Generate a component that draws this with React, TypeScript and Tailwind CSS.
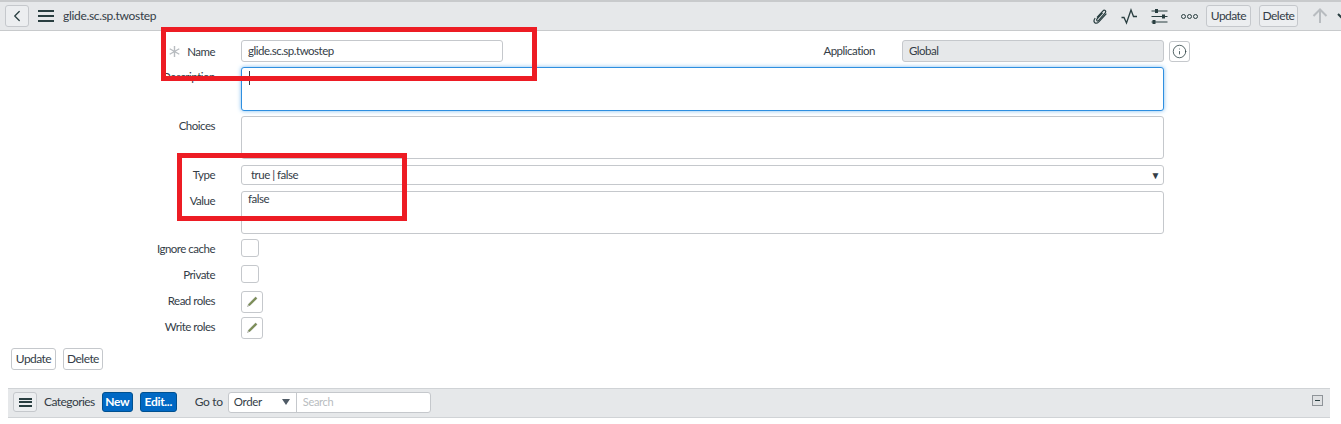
import { ChevronLeft, Info } from "lucide-react";

const font = "font-['Lato','Liberation_Sans',sans-serif]";
const text = "text-[12px] tracking-[-0.32px] text-[#343d47]";
const inputText = "text-[11.5px] tracking-[-0.5px] text-[#343d47]";
const labelText = "text-[11.5px] tracking-[-0.5px] text-[#343d47] leading-none";

function Bars({ w, bar, gap }: { w: string; bar: string; gap: string }) {
  return (
    <div className={`flex flex-col ${gap} ${w}`}>
      <span className={`${bar} bg-[#293e40]`} />
      <span className={`${bar} bg-[#293e40]`} />
      <span className={`${bar} bg-[#293e40]`} />
    </div>
  );
}

function ActionButton({ label, w, bg }: { label: string; w: string; bg: string }) {
  return (
    <button className={`${w} ${bg} ${text} h-[22px] border border-[#c5c8cc] rounded-[3px] leading-none tracking-[-0.55px] flex items-center justify-center`}>
      {label}
    </button>
  );
}

function Row({
  label,
  className,
  children,
}: {
  label: string;
  className: string;
  children: React.ReactNode;
}) {
  return (
    <div className={`flex items-start ${className}`}>
      <label className={`w-[215px] text-right shrink-0 pt-[4px] ${labelText}`}>{label}</label>
      <div className="ml-[26px] w-[923px]">{children}</div>
    </div>
  );
}

function TextArea({ h, focused, value }: { h: string; focused?: boolean; value?: string }) {
  return (
    <div
      className={`${h} ${inputText} w-full rounded-[3px] bg-white px-[6px] leading-none pt-[1px] border ${
        focused ? "border-[#2f8fe0] shadow-[0_0_4px_#7fbdf0]" : "border-[#c5c8cc]"
      }`}
    >
      {focused ? <span className="block w-px h-[14px] bg-[#343d47] ml-[1px] mt-[2px]" /> : value}
    </div>
  );
}

function PencilButton() {
  return (
    <button className="w-[22px] h-[22px] border border-[#c5c8cc] rounded-[3px] bg-white flex items-center justify-center">
      <svg width="14" height="14" viewBox="0 0 14 14">
        <path d="M3.2 9.4 L10.6 2 L12 3.4 L4.6 10.8 Z" fill="#7c8f52" stroke="#56624a" strokeWidth="0.4" />
        <path d="M3 9.8 L2 12 L4.2 11 Z" fill="#9a9d90" />
      </svg>
    </button>
  );
}

function PaperclipIcon() {
  return (
    <svg width="17" height="17" viewBox="0 0 17 17" fill="none" stroke="#293e40" strokeWidth="1.2">
      <path d="M5 9.5 L11 2.8 C12.4 1.3 14.6 2.9 13.4 4.7 L6.5 12.6 C5.6 13.6 4 12.5 4.9 11.2 L10.6 4.8" />
      <path d="M3.2 10.2 C1.8 12 1.5 13.4 2.6 14.5 C3.8 15.6 5.4 15.2 6.8 13.8 L14.4 5.6" />
    </svg>
  );
}

function PulseIcon() {
  return (
    <svg width="17" height="17" viewBox="0 0 17 17" fill="none" stroke="#293e40" strokeWidth="1.3">
      <path d="M0.5 9.5 H3 L5.5 15 L10 2 L12.5 8.5 H16" />
    </svg>
  );
}

function TuneIcon() {
  return (
    <svg width="17" height="17" viewBox="0 0 17 17" fill="#293e40" stroke="#293e40">
      <path d="M0.5 3 H16.5 M0.5 8.5 H16.5 M0.5 14 H16.5" strokeWidth="1" />
      <rect x="4" y="1" width="3" height="4" stroke="none" />
      <rect x="11" y="6.5" width="3" height="4" stroke="none" />
      <rect x="1.5" y="12" width="3" height="4" stroke="none" />
    </svg>
  );
}

export default function App() {
  return (
    <div className={`${font} relative w-[1341px] h-[424px] overflow-hidden bg-white`}>
      {/* Header */}
      <div className="h-[31px] bg-[#e6e8ea] border-t-2 border-t-[#c8cacc] border-b border-b-[#c8cacc] flex items-center pl-[5px]">
        <button className="w-[24px] h-[22px] border border-[#c5c8cc] rounded-[3px] bg-[#eceef0] flex items-center justify-center">
          <ChevronLeft className="w-[18px] h-[18px] text-[#293e40]" strokeWidth={1.75} />
        </button>
        <Bars w="w-[16px] ml-[9px]" bar="h-[2.5px]" gap="gap-[2.5px]" />
        <span className={`${text} ml-[9px]`}>glide.sc.sp.twostep</span>
        <div className="ml-auto flex items-center">
          <PaperclipIcon />
          <div className="ml-[12px]"><PulseIcon /></div>
          <div className="ml-[13px]"><TuneIcon /></div>
          <div className="flex gap-[1px] ml-[13px] mr-[8px]">
            <span className="w-[5px] h-[5px] rounded-full border border-[#293e40]" />
            <span className="w-[5px] h-[5px] rounded-full border border-[#293e40]" />
            <span className="w-[5px] h-[5px] rounded-full border border-[#293e40]" />
          </div>
          <ActionButton label="Update" w="w-[45px]" bg="bg-[#eceef0]" />
          <div className="w-[8px]" />
          <ActionButton label="Delete" w="w-[39px]" bg="bg-[#eceef0]" />
          <svg width="18" height="18" viewBox="0 0 18 18" fill="none" stroke="#b8bcc0" strokeWidth="2" className="ml-[13px]">
            <path d="M9 16 V3 M2.5 9 L9 2.5 L15.5 9" />
          </svg>
          <svg width="12" height="12" viewBox="0 0 12 12" fill="none" stroke="#293e40" strokeWidth="2" className="ml-[8px] -mr-[8px]">
            <path d="M1 4 L6 9 L11 4" />
          </svg>
        </div>
      </div>

      {/* Form */}
      <div className="pt-[9px]">
        <div className="flex items-start h-[27px]">
          <div className="w-[215px] flex justify-end items-center h-[22px] shrink-0 pt-[1px]">
            <svg width="11" height="11" viewBox="0 0 11 11" stroke="#b8bcc0" strokeWidth="1.4" className="mr-[7px]">
              <path d="M5.5 0 V11 M0.7 2.75 L10.3 8.25 M0.7 8.25 L10.3 2.75" />
            </svg>
            <span className={labelText}>Name</span>
          </div>
          <div className={`${inputText} ml-[26px] w-[262px] h-[22px] border border-[#c5c8cc] rounded-[3px] px-[6px] flex items-center`}>
            glide.sc.sp.twostep
          </div>
          <div className={`${labelText} w-[372px] h-[22px] flex items-center justify-end`}>Application</div>
          <div className={`${inputText} ml-[27px] w-[262px] h-[22px] border border-[#c5c8cc] rounded-[3px] bg-[#e6e8ea] px-[6px] flex items-center`}>
            Global
          </div>
          <button className="ml-[5px] mt-[1px] w-[21px] h-[21px] border border-[#c5c8cc] rounded-[3px] bg-white flex items-center justify-center">
            <Info className="w-[15px] h-[15px] text-[#293e40]" strokeWidth={1.25} />
          </button>
        </div>

        <Row label="Description" className="h-[49px]">
          <TextArea h="h-[44px]" focused />
        </Row>
        <Row label="Choices" className="h-[49px]">
          <TextArea h="h-[43px]" />
        </Row>
        <Row label="Type" className="h-[26px]">
          <div className={`${inputText} h-[20px] w-full border border-[#c5c8cc] rounded-[3px] bg-white pl-[9px] pr-[3px] flex items-center justify-between`}>
            <span>true | false</span>
            <span className="text-[10px] leading-none">▼</span>
          </div>
        </Row>
        <Row label="Value" className="h-[48px]">
          <TextArea h="h-[43px]" value="false" />
        </Row>
        <Row label="Ignore cache" className="h-[26px]">
          <div className="w-[18px] h-[18px] border border-[#c5c8cc] rounded-[3px]" />
        </Row>
        <Row label="Private" className="h-[26px]">
          <div className="w-[18px] h-[18px] border border-[#c5c8cc] rounded-[3px]" />
        </Row>
        <Row label="Read roles" className="h-[26px]">
          <PencilButton />
        </Row>
        <Row label="Write roles" className="h-[31px]">
          <PencilButton />
        </Row>

        <div className="flex gap-[7px] pl-[11px]">
          <ActionButton label="Update" w="w-[45px]" bg="bg-white" />
          <ActionButton label="Delete" w="w-[40px]" bg="bg-white" />
        </div>
      </div>

      {/* Related list */}
      <div className="mt-[18px] ml-[8px] w-[1322px] h-[30px] bg-[#e6e8ea] border-t border-b border-[#d0d3d6] flex items-center pl-[5px] pr-[7px] pb-[2px]">
        <button className="w-[24px] h-[20px] border border-[#c5c8cc] rounded-[3px] bg-[#eceef0] flex items-center justify-center">
          <Bars w="w-[13px]" bar="h-[2px]" gap="gap-[1.5px]" />
        </button>
        <span className={`${text} ml-[7px] tracking-[-0.55px]`}>Categories</span>
        <button className="ml-[7px] w-[31px] h-[20px] bg-[#0068c4] border border-[#00508f] rounded-[3px] text-white text-[12px] tracking-[-0.3px] font-bold leading-none">New</button>
        <button className="ml-[7px] w-[37px] h-[20px] bg-[#0068c4] border border-[#00508f] rounded-[3px] text-white text-[12px] tracking-[-0.3px] font-bold leading-none">Edit...</button>
        <span className={`${text} ml-[18px] w-[33px]`}>Go to</span>
        <div className="flex h-[21px] w-[203px] bg-white border border-[#c5c8cc] rounded-[3px]">
          <div className="w-[68px] border-r border-[#c5c8cc] flex items-center justify-between pl-[5px] pr-[6px] text-[11.5px] tracking-[-0.3px] text-[#343d47]">
            <span>Order</span>
            <span className="w-0 h-0 border-l-[4px] border-r-[4px] border-t-[6px] border-l-transparent border-r-transparent border-t-[#4f5b66]" />
          </div>
          <div className="flex-1 flex items-center pl-[6px] text-[11px] tracking-[-0.3px] text-[#b8bcc0]">Search</div>
        </div>
        <div className="ml-auto -mt-[4px] w-[11px] h-[11px] border border-[#8f9499] bg-[#dfe1e3] flex items-center justify-center">
          <span className="w-[5px] h-px bg-[#293e40]" />
        </div>
      </div>

      {/* Annotation boxes */}
      <div className="absolute left-[161px] top-[27px] w-[376px] h-[54px] border-[5px] border-[#ed1c24]" />
      <div className="absolute left-[177px] top-[153px] w-[230px] h-[68px] border-[5px] border-[#ed1c24]" />
    </div>
  );
}
